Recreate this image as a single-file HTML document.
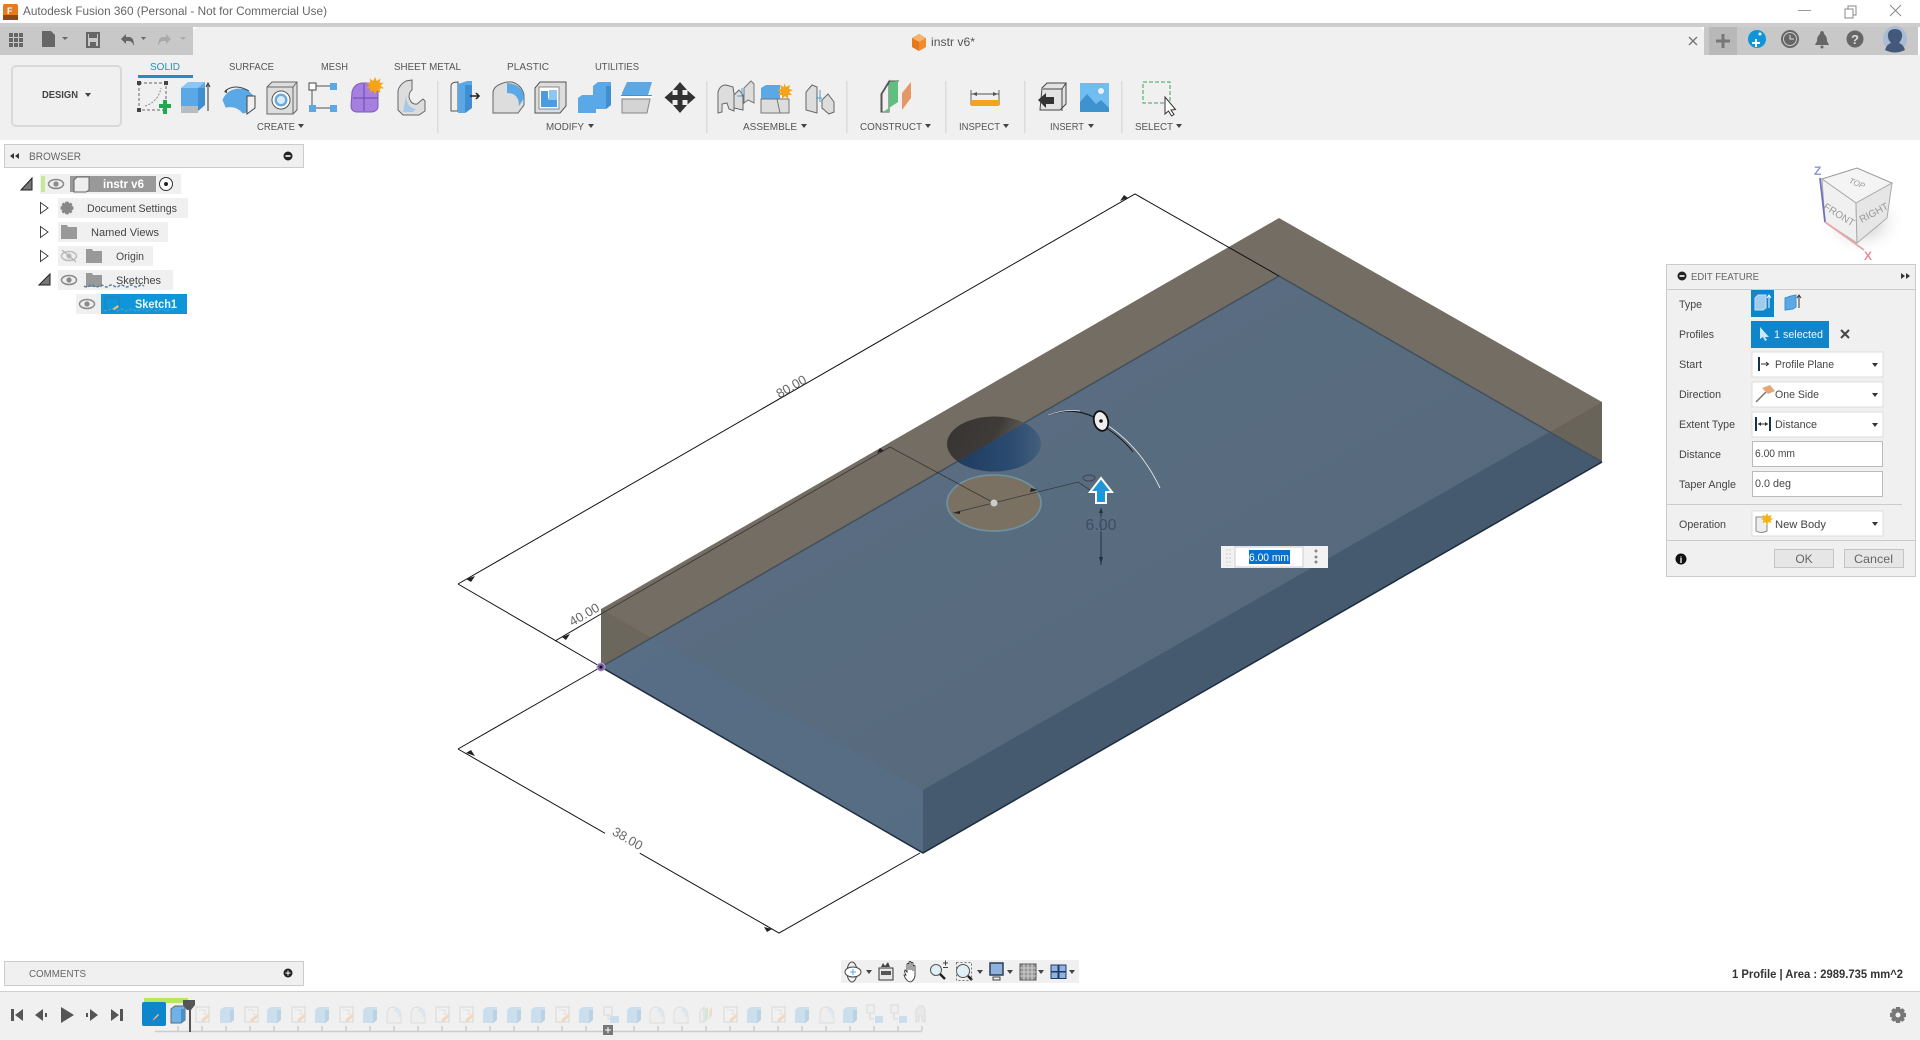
<!DOCTYPE html>
<html><head><meta charset="utf-8"><title>Autodesk Fusion 360</title>
<style>
html,body{margin:0;padding:0;background:#fff;width:1920px;height:1040px;overflow:hidden}
svg{display:block;position:absolute;left:0;top:0}
text{font-family:"Liberation Sans",Arial,sans-serif;font-size:11px;fill:#555}
.tb{font-size:10.5px;fill:#555}
.lb{font-size:11px;fill:#444}
</style></head><body>
<svg width="1920" height="1040" viewBox="0 0 1920 1040" xmlns="http://www.w3.org/2000/svg">
<defs>
<linearGradient id="gb" x1="0" y1="0" x2="1" y2="1"><stop offset="0" stop-color="#5c7085"/><stop offset="1" stop-color="#536679"/></linearGradient>
<linearGradient id="gh" x1="0" y1="0" x2="1" y2="0.3"><stop offset="0" stop-color="#353230"/><stop offset=".55" stop-color="#3f3b38"/><stop offset="1" stop-color="#7a756b"/></linearGradient>
<linearGradient id="gh2" x1="0" y1="0" x2="1" y2="0"><stop offset="0" stop-color="#1d3a5e"/><stop offset=".65" stop-color="#2b4b70"/><stop offset="1" stop-color="#47627f"/></linearGradient>
<radialGradient id="gs"><stop offset="0" stop-color="#aaa" stop-opacity=".85"/><stop offset="1" stop-color="#fff" stop-opacity="0"/></radialGradient>
<clipPath id="hc"><ellipse cx="994" cy="444" rx="47" ry="27.500"/></clipPath>
<g id="tsk"><rect x="-6" y="-8" width="13" height="15" fill="#f2f2f2" stroke="#c9c9c9"/><path d="M-3-5h6v6" fill="none" stroke="#ccc" stroke-dasharray="2 1"/><path d="M0 6L7 0" stroke="#f4c9a0" stroke-width="3"/></g>
<g id="tbd"><path d="M-7-5L-3-8H7V5L3 8H-7Z" fill="#b4d4ee"/><path d="M3-5H7V5L3 8Z" fill="#9cc0de"/></g>
<g id="tfl"><path d="M-7 8V-1Q-7-8 0-8Q7-6 7 1V8Z" fill="#eee" stroke="#d2d2d2"/><path d="M1-7Q7-5 7 2H4Q4-3 0-4Z" fill="#cfe2f2"/></g>
<g id="eye"><ellipse cx="0" cy="0" rx="7.5" ry="4.5" fill="#eee" stroke="#8a8a8a" stroke-width="1.5"/><circle r="2.6" fill="#8a8a8a"/></g>
<path id="folder" d="M0 2H6L7 4H16V16H0Z" fill="#999"/>
<path id="gear" d="M-2-8H2L2.6-5.6 4.6-6.8 6.9-4.5 5.6-2.5 8-2V2L5.6 2.6 6.8 4.6 4.5 6.9 2.5 5.6 2 8H-2L-2.6 5.6-4.6 6.8-6.9 4.5-5.6 2.5-8 2V-2L-5.6-2.6-6.8-4.6-4.5-6.9-2.5-5.6Z"/>
<path id="car" d="M-3 0H3L0 4Z" fill="#444"/>
</defs>

<!-- title bar -->
<rect width="1920" height="1040" fill="#fff"/>
<rect x="3" y="4" width="15" height="16" rx="2" fill="#e87a1c"/><rect x="3" y="15" width="15" height="5" fill="#8a4a14"/>
<text x="7" y="14" style="font-size:9px;font-weight:bold;fill:#fff">F</text>
<text x="23" y="15" textLength="304" lengthAdjust="spacingAndGlyphs" style="font-size:12px;fill:#666">Autodesk Fusion 360 (Personal - Not for Commercial Use)</text>
<path d="M1798 10.5h13" stroke="#999"/>
<path d="M1845 9h8v9h-8zM1848 9V6h8v9h-3" fill="#fff" stroke="#888"/>
<path d="M1890 5l11 11M1901 5l-11 11" stroke="#888"/>

<!-- header bars -->
<rect y="23" width="1920" height="4" fill="#cdcdcd"/>
<rect y="27" width="193" height="28" fill="#c8c8c8"/>
<rect x="1704" y="27" width="214" height="28" fill="#c8c8c8"/>
<rect y="55" width="1920" height="85" fill="#f0f0f0"/>
<path d="M193 55V33Q193 27 199 27H1698Q1704 27 1704 33V55Z" fill="#f0f0f0"/>
<!-- quick access -->
<g fill="#666"><rect x="9" y="33" width="4" height="4"/><rect x="14" y="33" width="4" height="4"/><rect x="19" y="33" width="4" height="4"/><rect x="9" y="38" width="4" height="4"/><rect x="14" y="38" width="4" height="4"/><rect x="19" y="38" width="4" height="4"/><rect x="9" y="43" width="4" height="4"/><rect x="14" y="43" width="4" height="4"/><rect x="19" y="43" width="4" height="4"/>
<path d="M42 31h9l4 4v12H42z"/><path d="M62 37h6l-3 3z"/>
<path d="M87 33h12v14H87z" fill="none" stroke="#666" stroke-width="2"/><rect x="89" y="33" width="8" height="5"/><rect x="90" y="42" width="6" height="5"/>
<path d="M121 39l5-5v3h3q5 0 5 9q-2-5-5-5h-3v3z"/><path d="M141 37h5l-2.500 3z"/></g>
<path d="M171 39l-5-5v3h-3q-5 0-5 9q2-5 5-5h3v3z" fill="#aaa"/><path d="M180 37h6l-3 3z" fill="#aaa"/>
<!-- doc tab -->
<path d="M919 34l7 4v9l-7 4-7-4v-9z" fill="#f28a2e"/><path d="M919 34l7 4-7 4-7-4z" fill="#f9b26c"/><path d="M919 42v9l-7-4v-9z" fill="#e57a1a"/>
<text x="931" y="46" textLength="44" lengthAdjust="spacingAndGlyphs" style="font-size:12px">instr v6*</text>
<path d="M1689 37l8 8M1697 37l-8 8" stroke="#777" stroke-width="1.400"/>
<rect x="1709" y="27" width="28" height="28" fill="#b8b8b8"/><path d="M1723 34v14M1716 41h14" stroke="#777" stroke-width="3"/>
<circle cx="1757" cy="39" r="9" fill="#0f96d8"/><path d="M1752 43h8M1756 39v8" stroke="#fff" stroke-width="2"/><circle cx="1760" cy="34" r="1.500" fill="#fff"/>
<circle cx="1790" cy="39" r="8.500" fill="#666" stroke="#666"/><circle cx="1790" cy="39" r="6.500" fill="none" stroke="#ccc"/><path d="M1790 35v4h4" stroke="#ddd" fill="none"/>
<path d="M1822 31q2 0 2 3q3 2 3 7l2 4h-14l2-4q0-5 3-7q0-3 2-3z" fill="#666"/><circle cx="1822" cy="47" r="1.500" fill="#666"/>
<circle cx="1855" cy="39" r="8.500" fill="#666"/><text x="1855" y="44" text-anchor="middle" style="font-size:13px;font-weight:bold;fill:#ddd">?</text>
<ellipse cx="1895" cy="39" rx="12" ry="13" fill="#a9bcd4"/><path d="M1885 50q2-6 6-7q-4-5-3-9q1-5 7-5q6 0 7 5q1 4-3 9q4 1 6 7q-10 5-20 0z" fill="#44597a"/>

<!-- design button -->
<rect x="12" y="66" width="109" height="60" rx="4" fill="#f0f0f0" stroke="#d9d9d9" stroke-width="2"/>
<text x="42" y="98" textLength="36" lengthAdjust="spacingAndGlyphs" style="font-size:10.500px;font-weight:bold;fill:#444">DESIGN</text>
<path d="M85 93h6l-3 4z" fill="#444"/>
<!-- tabs -->
<text class="tb" x="150" y="70" textLength="30" lengthAdjust="spacingAndGlyphs" style="fill:#1f8fc8">SOLID</text>
<rect x="138" y="75" width="55" height="3" fill="#1f8fc8"/>
<text class="tb" x="229" y="70" textLength="45" lengthAdjust="spacingAndGlyphs">SURFACE</text><text class="tb" x="321" y="70" textLength="27" lengthAdjust="spacingAndGlyphs">MESH</text><text class="tb" x="394" y="70" textLength="67" lengthAdjust="spacingAndGlyphs">SHEET METAL</text><text class="tb" x="507" y="70" textLength="42" lengthAdjust="spacingAndGlyphs">PLASTIC</text><text class="tb" x="595" y="70" textLength="44" lengthAdjust="spacingAndGlyphs">UTILITIES</text>
<!-- labels -->
<text class="tb" x="257" y="130" textLength="38" lengthAdjust="spacingAndGlyphs">CREATE</text><text class="tb" x="546" y="130" textLength="38" lengthAdjust="spacingAndGlyphs">MODIFY</text><text class="tb" x="743" y="130" textLength="54" lengthAdjust="spacingAndGlyphs">ASSEMBLE</text><text class="tb" x="860" y="130" textLength="62" lengthAdjust="spacingAndGlyphs">CONSTRUCT</text><text class="tb" x="959" y="130" textLength="41" lengthAdjust="spacingAndGlyphs">INSPECT</text><text class="tb" x="1050" y="130" textLength="34" lengthAdjust="spacingAndGlyphs">INSERT</text><text class="tb" x="1135" y="130" textLength="38" lengthAdjust="spacingAndGlyphs">SELECT</text>
<use href="#car" x="301" y="124"/><use href="#car" x="591" y="124"/><use href="#car" x="804" y="124"/><use href="#car" x="928" y="124"/><use href="#car" x="1006" y="124"/><use href="#car" x="1091" y="124"/><use href="#car" x="1179" y="124"/>
<!-- dividers -->
<g fill="#dcdcdc"><rect x="437" y="81" width="1.500" height="52"/><rect x="706" y="81" width="1.500" height="52"/><rect x="846" y="81" width="1.500" height="52"/><rect x="945" y="81" width="1.500" height="52"/><rect x="1024" y="81" width="1.500" height="52"/><rect x="1121" y="81" width="1.500" height="52"/></g>
<!-- create icons -->
<rect x="139" y="83" width="27" height="27" fill="none" stroke="#666" stroke-dasharray="3 2"/><path d="M145 106Q158 102 161 88" fill="none" stroke="#888" stroke-dasharray="2 1.500"/><g fill="#444"><rect x="137" y="81" width="4" height="4"/><rect x="164" y="81" width="4" height="4"/><rect x="137" y="108" width="4" height="4"/></g><path d="M159 104h4v-4h4v4h4v4h-4v6h-4v-6h-4z" fill="#22a94d"/>
<path d="M181 88l7-6h17v23l-7 6H181z" fill="#5aa9e6"/><path d="M181 88l7-6h17l-7 6z" fill="#8cc6f2"/><path d="M198 88h7v17l-7 6z" fill="#3f8fd0"/><path d="M181 106h17v7H181z" fill="#bbb"/><path d="M208 111V85M206 87l2-4 2 4" stroke="#333" fill="none"/>
<path d="M223 100q6-14 24-10l6 6q-3 0-6 16l-4 1q-6-8-17-6z" fill="#5aa9e6" stroke="#5aa9e6" stroke-linejoin="round"/><path d="M247 96h8v12l-8 6z" fill="#f0f0f0" stroke="#444"/><path d="M225 91q10-8 24 0" fill="none" stroke="#444"/><path d="M224 92l3-3v4z" fill="#444"/>
<path d="M267 87l5-5h25v28l-4 4H267z" fill="#ddd" stroke="#666"/><path d="M267 87h26v27M293 87l4-5" fill="none" stroke="#666"/><circle cx="281" cy="100" r="9" fill="#fff" stroke="#555"/><circle cx="281" cy="100" r="6.500" fill="#6aa9dc"/><circle cx="281" cy="100" r="4" fill="#d9ecf8"/>
<rect x="309" y="83" width="7" height="7" fill="#fff" stroke="#444"/><rect x="330" y="83" width="7" height="7" fill="#5aa9e6"/><rect x="309" y="105" width="7" height="7" fill="#5aa9e6"/><rect x="330" y="105" width="7" height="7" fill="#5aa9e6"/><path d="M316 86h14M316 108h14M312 90v15" stroke="#555"/>
<path d="M352 92q2-8 10-9h8q8 2 8 10v14q-1 5-8 5h-14q-5-1-5-6z" fill="#a67fe0" stroke="#7d5bb8"/><path d="M353 98h25M364 84v27" stroke="#6a4aa6"/><path d="M375 77l1.800 4 3.600-2.500-.8 4.300 4.300 0-3.500 2.700 3.500 2.700-4.300.5.800 4.300-3.600-2.500-1.800 4-1.800-4-3.600 2.500.8-4.300-4.300-.5 3.500-2.700-3.500-2.700 4.300 0-.8-4.300 3.600 2.500z" fill="#f4a416"/>
<path d="M398 110V91q1-6 8-10l6-1v10q-3 2-3 7q2 8 8 7l6-5 2 2v10l-6 4h-16z" fill="#ddd" stroke="#666"/><path d="M406 96q1 12 10 13l-3 3h-10z" fill="#a8c8e8"/>
<!-- modify icons -->
<path d="M451 111V86q0-4 7-4v29z" fill="#f0f0f0" stroke="#555"/><path d="M458 84l9-3h5v27l-7 5h-7z" fill="#5aa9e6"/><path d="M465 85h7v23l-7 5z" fill="#3f8fd0"/><path d="M470 96h8M476 93l3 3-3 3" stroke="#222" stroke-width="1.500" fill="none"/>
<path d="M493 113V93q0-8 14-11h5q10 3 12 13v10l-6 8z" fill="#ddd" stroke="#666"/><path d="M507 83q16 1 17 15l-5 8q0-13-12-13z" fill="#5aa9e6"/>
<path d="M535 88l5-6h26v24l-6 7H535z" fill="#ddd" stroke="#555"/><rect x="539" y="87" width="20" height="22" fill="#fff" stroke="#888"/><path d="M541 98h8v-8h8v17h-16z" fill="#8cc6f2"/><path d="M541 91h7v9h9v7h-16z" fill="#4a9be0"/>
<path d="M578 98l4-3h11V86l5-4h13v23l-5 4h-10v4H578z" fill="#5aa9e6"/><path d="M606 86h5v19l-5 4z" fill="#3f8fd0"/>
<path d="M622 93l5-11h25l-4 13H622z" fill="#5aa9e6"/><path d="M621 97h31" stroke="#fff" stroke-width="2"/><path d="M621 95.500h31" stroke="#4a90c8"/><path d="M622 99h28l-3 14H622z" fill="#d4d4d4" stroke="#888"/>
<path d="M680 82l7 8h-4.500v5h5v-4.500l8 7-8 7V100h-5v5H687l-7 8-7-8h4.500v-5h-5v4.500l-8-7 8-7V95h5v-5H673z" fill="#333"/>
<!-- assemble -->
<path d="M718 113V92q2-7 8-7l7 2 1 7v17l-5-2-2-6-5 1v8z" fill="#ddd" stroke="#666"/><path d="M734 108V95l5-5 4 5v15z" fill="#ddd" stroke="#666"/><path d="M744 103V88l7-7 3 3v19l-6-3z" fill="#ddd" stroke="#777"/><path d="M737 96h5v-8" stroke="#4a9cd9" fill="none"/>
<path d="M761 88l5-3h14v14h-19z" fill="#5aa9e6"/><path d="M761 99h19v14h-19z" fill="#ddd" stroke="#777"/><path d="M777 99h12l0 14h-9z" fill="#ddd" stroke="#777"/><path d="M784 83l2 4 4-2-1 4 4 1-4 2 3 3-4 0 0 4-3-3-3 3 0-4-4 0 3-3-4-2 4-1-1-4 4 2z" fill="#f4a416"/>
<path d="M806 110V92l6-7 5 2v26z" fill="#ddd" stroke="#666"/><path d="M820 90v12M816 98h6" stroke="#4a9cd9"/><path d="M822 100l6-6 6 8v10l-5 2-7-6z" fill="#ddd" stroke="#666"/>
<!-- construct -->
<path d="M881 112V94l8-13v31z" fill="#f0f0f0" stroke="#555"/><path d="M883 112l15-10V82l-9-1v31z" fill="#5fbf7e"/><path d="M902 110l9-12V82l-9 11z" fill="#e59865"/>
<path d="M882 112V94l8-13 9 0" fill="none" stroke="#555"/>
<!-- inspect -->
<path d="M971 90v15M999 90v15" stroke="#666"/><path d="M971 94h28" stroke="#555"/><path d="M972 94l5-2v4zM998 94l-5-2v4z" fill="#555"/><rect x="971" y="100" width="28" height="6" fill="#f2a51c"/>
<!-- insert -->
<path d="M1042 88l5-5h19v21l-6 6h-20z" fill="#e3e3e3" stroke="#444"/><path d="M1043 89h19v22M1062 89l4-6" fill="none" stroke="#444"/><path d="M1038 100l8-7v4h8v7h-8v4z" fill="#333"/>
<rect x="1080" y="83" width="29" height="29" fill="#70bdf2"/><path d="M1080 112V102l7-8 9 10 5-4 8 8v4z" fill="#3e92cd"/><circle cx="1101" cy="91" r="3" fill="#e6f4ff"/>
<!-- select -->
<rect x="1143" y="82" width="27" height="21" fill="none" stroke="#3da35d" stroke-dasharray="4 2"/>
<path d="M1165 97v17l3.500-3 3 5 2.500-1.500-3-4.500 4.500-.5z" fill="#fff" stroke="#333"/>

<!-- 3D model -->
<path d="M601 667L1279 276L1602 462L923 853Z" fill="url(#gb)"/>
<path d="M601 609L601 667L923 853L923 790Z" fill="#557089" opacity=".55"/>
<path d="M923 790L1602 402V462L923 853Z" fill="#45596f"/>
<path d="M601 609L1279 218L1602 402V462L1279 276L601 667Z" fill="#736d63"/>
<path d="M601 609L652 638L601 667Z" fill="#6b675c"/>
<path d="M1602 402L1602 462L1550 432Z" fill="#69645a"/>
<path d="M601 667L1279 276L1602 462" fill="none" stroke="#434f5c" stroke-width="1.500"/>
<path d="M601 667L923 853L1602 462" fill="none" stroke="#1d2c3e" stroke-width="1.500"/>
<!-- hole -->
<g clip-path="url(#hc)">
<rect x="945" y="414" width="100" height="60" fill="url(#gh)"/>
<path d="M950 466L1045 411V475H950Z" fill="url(#gh2)"/>
</g>
<!-- sketch circle -->
<ellipse cx="994" cy="503" rx="47" ry="28" fill="#7a7163" stroke="#6f93a2" stroke-width="1.600"/>
<!-- dimensions -->
<g stroke="#111" fill="none" stroke-width="1">
<path d="M458 584L1135 194L1279 276"/>
<path d="M458 584L601 667"/>
<path d="M458 749L601 667"/>
<path d="M458 749L779 933L920 853"/>
<path d="M555 641L601 614"/>
</g>
<g stroke="#2a2a2a" fill="none" stroke-width=".8" opacity=".8">
<path d="M601 614L890 447L994 503"/>
<path d="M953 513L1078 482L1090 490"/>
</g>
<g fill="#222">
<path d="M466 579l9-3-4 6z"/><path d="M1128 198l-8 3 4-6z"/><path d="M562 637l8-3-4 6z"/><path d="M884 451l-7 2 3-5z"/><path d="M466 753l9 3-4-6z"/><path d="M772 929l-8-2 3 5z"/>
</g>
<rect x="760" y="372" width="44" height="20" fill="#fff" transform="rotate(-30 782 382)"/>
<rect x="561" y="604" width="36" height="18" fill="#fff" transform="rotate(-30 579 613)"/>
<rect x="606" y="827" width="40" height="20" fill="#fff" transform="rotate(30 626 837)"/>
<text x="791" y="391" text-anchor="middle" transform="rotate(-30 791 386)" style="font-size:13px;fill:#666">80.00</text>
<text x="584" y="619" text-anchor="middle" transform="rotate(-30 584 614)" style="font-size:13px;fill:#666">40.00</text>
<text x="628" y="843" text-anchor="middle" transform="rotate(30 628 838)" style="font-size:13px;fill:#666">38.00</text>
<circle cx="601" cy="667" r="4" fill="#7a5fa0" stroke="#b8a4d0"/><circle cx="601" cy="667" r="1.500" fill="#111"/>
<path d="M960 511l-6 2 6 1zM1030 492l8-2-7-2z" fill="#222"/>
<circle cx="994" cy="503" r="3.500" fill="#ccc"/>
<!-- manipulators -->
<path d="M1048 415Q1075 405 1101 421" stroke="#1a1a1a" fill="none" stroke-width="1.200"/><path d="M1048 415Q1064 409 1080 411" stroke="#dde" fill="none" stroke-width=".7"/>
<path d="M1101 421Q1140 445 1160 488" stroke="#e2e6ea" fill="none" stroke-width=".9"/><path d="M1106 426Q1124 438 1134 451" stroke="#111" fill="none" stroke-width=".8" transform="translate(-1,1)"/>
<ellipse cx="1101" cy="421" rx="7" ry="10" transform="rotate(-15 1101 421)" fill="#eee" stroke="#111" stroke-width="1.800"/><circle cx="1101" cy="421" r="1.800" fill="#111"/>
<ellipse cx="1089" cy="478" rx="6" ry="3" fill="none" stroke="#445"/>
<path d="M1101 478l11 14h-6v11h-10v-11h-6z" fill="#1e96dc" stroke="#fff" stroke-width="2"/>
<path d="M1101 508v57" stroke="#1f3045"/><path d="M1099 513l2-5 2 5zM1099 557l2 7 2-7z" fill="#1f3045"/>
<rect x="1086" y="516" width="30" height="16" fill="#5a6f84" opacity=".5"/>
<text x="1101" y="530" text-anchor="middle" style="font-size:16px;fill:#3c4d63">6.00</text>
<!-- input -->
<rect x="1221" y="546" width="107" height="22" fill="#f2f2f2"/>
<path d="M1227 549v17M1230 549v17" stroke="#ccc" stroke-dasharray="2 2"/>
<rect x="1235" y="547" width="68" height="20" fill="#fff" stroke="#ccc"/>
<rect x="1249" y="550" width="41" height="14" fill="#0a70d0"/>
<text x="1249" y="561" textLength="40" lengthAdjust="spacingAndGlyphs" style="font-size:11px;fill:#fff">6.00 mm</text>
<g fill="#888"><circle cx="1316" cy="551" r="1.500"/><circle cx="1316" cy="557" r="1.500"/><circle cx="1316" cy="562" r="1.500"/></g>

<!-- browser -->
<rect x="4.500" y="144.500" width="299" height="23" fill="#f0f0f0" stroke="#ccc"/>
<path d="M10 156l4-3v6zM15 156l4-3v6z" fill="#333"/>
<text x="29" y="160" textLength="52" lengthAdjust="spacingAndGlyphs" style="fill:#666">BROWSER</text>
<circle cx="288" cy="156" r="4.500" fill="#222"/><rect x="285.500" y="155.200" width="5" height="1.600" fill="#fff"/>
<g fill="#f0f0f0"><rect x="40" y="174" width="141" height="20"/><rect x="58" y="198" width="130" height="20"/><rect x="58" y="222" width="110" height="20"/><rect x="58" y="246" width="95" height="20"/><rect x="58" y="270" width="115" height="20"/><rect x="76" y="294" width="111" height="20"/></g>
<path d="M21 190L32 178V190Z" fill="#777" stroke="#222"/>
<rect x="41" y="176" width="4" height="16" fill="#c8e896"/>
<use href="#eye" x="56" y="184"/>
<rect x="70" y="176" width="86" height="16" fill="#999"/>
<path d="M74 180l3-3h12v13l-3 2H74z" fill="#eee" stroke="#666"/>
<text x="103" y="188" textLength="41" lengthAdjust="spacingAndGlyphs" style="font-weight:bold;fill:#fff;font-size:11.500px">instr v6</text>
<circle cx="166" cy="184" r="6.500" fill="#fff" stroke="#333"/><circle cx="166" cy="184" r="2" fill="#222"/>
<path d="M40.500 202.500L48 208L40.500 213.500ZM40.500 226.500L48 232L40.500 237.500ZM40.500 250.500L48 256L40.500 261.500Z" fill="#fff" stroke="#444"/>
<g transform="translate(67 208) scale(.8)"><use href="#gear" fill="#888"/></g>
<text class="lb" x="87" y="212" textLength="90" lengthAdjust="spacingAndGlyphs">Document Settings</text>
<use href="#folder" x="61" y="223" />
<text class="lb" x="91" y="236" textLength="68" lengthAdjust="spacingAndGlyphs">Named Views</text>
<use href="#eye" x="69" y="256" opacity=".5"/><path d="M62 250l14 12" stroke="#aaa"/>
<use href="#folder" x="86" y="247"/>
<text class="lb" x="116" y="260" textLength="28" lengthAdjust="spacingAndGlyphs">Origin</text>
<path d="M39 285L50 274V285Z" fill="#777" stroke="#222"/>
<use href="#eye" x="69" y="280"/>
<use href="#folder" x="86" y="271"/>
<text class="lb" x="116" y="284" textLength="45" lengthAdjust="spacingAndGlyphs">Sketches</text>
<path d="M84 286q3 2 5 0t5 0 5 0 5 0 5 0 5 0 5 0 5 0 5 0 5 0 5 0 5 0" fill="none" stroke="#5b7fa0" stroke-width="1.500" stroke-dasharray="3 1.500"/>
<use href="#eye" x="87" y="304"/>
<rect x="101" y="294" width="86" height="20" fill="#0f96d8"/>
<path d="M112 309l6-4 1 2-5 3z" fill="#e9c27a"/><rect x="105" y="297" width="14" height="14" fill="none" stroke="#2b7fb2"/>
<text x="135" y="308" textLength="42" lengthAdjust="spacingAndGlyphs" style="font-weight:bold;fill:#e8f6ff;font-size:11.500px">Sketch1</text>
<path d="M104 310q3 2 5 0t5 0 5 0 5 0 5 0 5 0 5 0 5 0 5 0 5 0 5 0 5 0 5 0 5 0" fill="none" stroke="#5aa0cc" stroke-dasharray="3 1.500"/>

<!-- view cube -->
<ellipse cx="1862" cy="222" rx="44" ry="34" fill="url(#gs)"/>
<path d="M1822 179L1857 168L1892 183L1856 203Z" fill="#f4f4f4" stroke="#999"/>
<path d="M1822 179L1856 203L1857 243L1825 222Z" fill="#f0f0f0" stroke="#aaa"/>
<path d="M1856 203L1892 183L1887 218L1857 243Z" fill="#e6e6e6" stroke="#aaa"/>
<text x="1857" y="186" text-anchor="middle" transform="rotate(22 1857 183)" style="font-size:8px;font-style:italic;fill:#999">TOP</text>
<text x="1839" y="218" text-anchor="middle" transform="rotate(32 1839 215)" style="font-size:10px;fill:#999">FRONT</text>
<text x="1874" y="216" text-anchor="middle" transform="rotate(-28 1874 213)" style="font-size:10px;fill:#999">RIGHT</text>
<path d="M1820 178L1825 222" stroke="#6d72c0" stroke-width="1.800"/>
<path d="M1825 222L1864 250" stroke="#e8a8a8" stroke-width="1.800"/>
<text x="1814" y="175" style="font-size:12px;font-weight:bold;fill:#8e96d8">Z</text>
<text x="1864" y="260" style="font-size:12px;font-weight:bold;fill:#f08a96">X</text>

<!-- edit panel -->
<rect x="1666.500" y="264.500" width="249" height="312" fill="#f0f0f0" stroke="#ccc"/>
<path d="M1666 289.500h250" stroke="#ccc"/>
<circle cx="1682" cy="276" r="4.500" fill="#222"/><rect x="1679.500" y="275.200" width="5" height="1.600" fill="#fff"/>
<text x="1691" y="280" textLength="68" lengthAdjust="spacingAndGlyphs" style="font-size:10.500px;fill:#666">EDIT FEATURE</text>
<path d="M1901 273l4 3-4 3zM1906 273l4 3-4 3z" fill="#333"/>
<text class="lb" x="1679" y="308" textLength="23" lengthAdjust="spacingAndGlyphs">Type</text><text class="lb" x="1679" y="338" textLength="35" lengthAdjust="spacingAndGlyphs">Profiles</text><text class="lb" x="1679" y="368" textLength="23" lengthAdjust="spacingAndGlyphs">Start</text><text class="lb" x="1679" y="398" textLength="42" lengthAdjust="spacingAndGlyphs">Direction</text><text class="lb" x="1679" y="428" textLength="56" lengthAdjust="spacingAndGlyphs">Extent Type</text><text class="lb" x="1679" y="458" textLength="42" lengthAdjust="spacingAndGlyphs">Distance</text><text class="lb" x="1679" y="488" textLength="57" lengthAdjust="spacingAndGlyphs">Taper Angle</text><text class="lb" x="1679" y="528" textLength="47" lengthAdjust="spacingAndGlyphs">Operation</text>
<rect x="1751" y="290" width="23" height="27" fill="#0f86cc"/>
<path d="M1755 298l3-3h8v13l-3 2h-8z" fill="#9ecbee" stroke="#cde"/><path d="M1769 308v-12M1767 298l2-3 2 3" stroke="#fff" fill="none"/>
<path d="M1785 298l6-2 5-1v12l-3 2-8 1z" fill="#5aa9e6" stroke="#3f8fd0"/><path d="M1799 308v-12M1797 298l2-3 2 3" stroke="#333" fill="none"/>
<rect x="1751" y="321" width="78" height="27" fill="#0f86cc"/>
<path d="M1760 327v12l3-2 2 4 2-1-2-3h4z" fill="#cce8f8"/>
<text x="1774" y="338" textLength="49" lengthAdjust="spacingAndGlyphs" style="font-size:11px;fill:#eaf6ff">1 selected</text>
<path d="M1841 330l8 8M1849 330l-8 8" stroke="#444" stroke-width="2"/>
<g fill="#fff" stroke="#dcdcdc"><rect x="1752" y="352" width="131" height="25"/><rect x="1752" y="382" width="131" height="25"/><rect x="1752" y="412" width="131" height="25"/><rect x="1752" y="511" width="131" height="25"/></g>
<g fill="#fff" stroke="#bbb"><rect x="1752.500" y="441.500" width="130" height="25"/><rect x="1752.500" y="471.500" width="130" height="25"/></g>
<path d="M1759 357v14" stroke="#17314e" stroke-width="2"/><path d="M1761 364h7M1766 362l2.500 2-2.500 2" stroke="#333" fill="none"/>
<text class="lb" x="1775" y="368" textLength="59" lengthAdjust="spacingAndGlyphs">Profile Plane</text>
<path d="M1756 402l10-10" stroke="#777" stroke-width="1.500"/><path d="M1762 388l8-3 5 6-7 3z" fill="#e4a878"/>
<text class="lb" x="1775" y="398" textLength="44" lengthAdjust="spacingAndGlyphs">One Side</text>
<path d="M1756 417v14M1770 417v14" stroke="#17314e" stroke-width="2"/><path d="M1758 424h10" stroke="#333"/><path d="M1758 424l3-2v4zM1768 424l-3-2v4z" fill="#333"/>
<text class="lb" x="1775" y="428" textLength="42" lengthAdjust="spacingAndGlyphs">Distance</text>
<text class="lb" x="1755" y="457" textLength="40" lengthAdjust="spacingAndGlyphs">6.00 mm</text>
<text class="lb" x="1755" y="487" textLength="36" lengthAdjust="spacingAndGlyphs">0.0 deg</text>
<path d="M1756 517v14q5 3 11 0v-14z" fill="#eee" stroke="#888"/><path d="M1767 513l1.500 3 3-1-1 3 3 1-3 1 1 3-3-1-1.500 3-1.500-3-3 1 1-3-3-1 3-1-1-3 3 1z" fill="#f4b416"/>
<text class="lb" x="1775" y="528" textLength="51" lengthAdjust="spacingAndGlyphs">New Body</text>
<g fill="#333"><path d="M1872 363h6l-3 4zM1872 393h6l-3 4zM1872 423h6l-3 4zM1872 522h6l-3 4z"/></g>
<path d="M1666 504.500h236M1666 540.500h250" stroke="#ccc"/>
<circle cx="1681" cy="559" r="5.500" fill="#111"/><text x="1681" y="563" text-anchor="middle" style="font-weight:bold;font-size:9px;fill:#fff">i</text>
<rect x="1774.500" y="549.500" width="59" height="18" fill="#e6e6e6" stroke="#c4c4c4"/><text x="1804" y="563" text-anchor="middle" style="font-size:12px;fill:#666">OK</text>
<rect x="1844.500" y="549.500" width="59" height="18" fill="#e6e6e6" stroke="#c4c4c4"/><text x="1854" y="563" textLength="39" lengthAdjust="spacingAndGlyphs" style="font-size:12px;fill:#666">Cancel</text>

<!-- comments -->
<rect x="4.500" y="961.500" width="299" height="24" fill="#f0f0f0" stroke="#ccc"/>
<text x="29" y="977" textLength="57" lengthAdjust="spacingAndGlyphs" style="font-size:10.500px;fill:#666">COMMENTS</text>
<circle cx="288" cy="973" r="4.500" fill="#222"/><path d="M285.500 973h5M288 970.500v5" stroke="#fff"/>
<!-- nav bar -->
<rect x="841" y="960" width="238" height="23" fill="#f0f0f0"/>
<ellipse cx="852" cy="972" rx="5" ry="10" fill="none" stroke="#444"/><ellipse cx="853" cy="972" rx="8" ry="5" fill="#fff" stroke="#444"/><path d="M850 972h6M853 969v6" stroke="#5aa9e6"/>
<use href="#car" x="869" y="970"/>
<rect x="879" y="968" width="14" height="12" fill="#e8e8e8" stroke="#333"/><rect x="881" y="971" width="10" height="4" fill="#555"/><path d="M881 967l2-4 2 3 3-4 2 5z" fill="#444"/>
<path d="M906 975q-2-3-1-5l2 2v-8q1-1 2 0v6-8q1-1 2 0v8-7q1-1 2 0v8-5q1-1 2 0v10q-1 5-5 6-4-1-6-7z" fill="#fff" stroke="#333" stroke-width=".9"/>
<circle cx="936" cy="970" r="5.500" fill="#dff0f6" stroke="#555"/><path d="M940 974l5 5" stroke="#222" stroke-width="2.500"/><path d="M943 963h5M945.500 960.500v5M943 967.500h5" stroke="#444"/>
<circle cx="963" cy="971" r="6.500" fill="#dff0f6" stroke="#555"/><path d="M968 976l4 4" stroke="#222" stroke-width="2.500"/><rect x="956.500" y="962.500" width="15" height="18" fill="none" stroke="#777" stroke-dasharray="2 2"/>
<use href="#car" x="980" y="970"/>
<rect x="990" y="963" width="13" height="12" fill="#8fb3dc" stroke="#2c3e55" stroke-width="1.500"/><path d="M993 977h7v3h-7z" fill="none" stroke="#444"/>
<use href="#car" x="1010" y="970"/>
<rect x="1020" y="964" width="16" height="16" fill="#999" stroke="#555"/><path d="M1024 964v16M1028 964v16M1032 964v16M1020 968h16M1020 972h16M1020 976h16" stroke="#ddd" stroke-width=".8"/>
<use href="#car" x="1041" y="970"/>
<g fill="#8fb3dc" stroke="#1f3a66"><rect x="1051" y="965" width="7" height="6.500"/><rect x="1059" y="965" width="7" height="6.500"/><rect x="1051" y="972" width="7" height="6.500"/><rect x="1059" y="972" width="7" height="6.500"/></g>
<use href="#car" x="1072" y="970"/>
<text x="1732" y="978" textLength="171" lengthAdjust="spacingAndGlyphs" style="font-size:11.500px;font-weight:bold;fill:#333">1 Profile | Area : 2989.735 mm^2</text>

<!-- timeline -->
<rect y="991" width="1920" height="49" fill="#f0f0f0"/><path d="M0 991.500h1920" stroke="#d0d0d0"/>
<g fill="#555">
<path d="M11 1009h3v12h-3zM23 1009v12l-8-6z"/>
<path d="M43 1009v12l-8-6zM45 1013h2v4h-2z"/>
<path d="M61 1007l13 8-13 8z"/>
<path d="M86 1013h2v4h-2zM90 1009l8 6-8 6z"/>
<path d="M111 1009l8 6-8 6zM120 1009h3v12h-3z"/>
</g>
<path d="M155 1031.500H922" stroke="#ccc" stroke-width="1.500"/>
<path d="M178 1026v5M202 1026v5M226 1026v5M250 1026v5M274 1026v5M298 1026v5M322 1026v5M346 1026v5M370 1026v5M394 1026v5M418 1026v5M442 1026v5M466 1026v5M490 1026v5M514 1026v5M538 1026v5M562 1026v5M586 1026v5M610 1026v5M634 1026v5M658 1026v5M682 1026v5M706 1026v5M730 1026v5M754 1026v5M778 1026v5M802 1026v5M826 1026v5M850 1026v5M874 1026v5M898 1026v5M922 1026v5" stroke="#bbb"/>
<rect x="144" y="998" width="44" height="5" fill="#b4e85a"/>
<rect x="142" y="1002" width="24" height="24" rx="2" fill="#0f86cc"/>
<path d="M153 1019l5-5 1 1-5 5z" fill="#e8c27a"/><path d="M153 1020l2-2" stroke="#e88"/>
<path d="M171 1009l4-3h10v14l-4 3h-10z" fill="#6fb2e8" stroke="#666"/><path d="M181 1009h4v11l-4 3z" fill="#4a8fc8"/>
<g opacity=".62">
<use href="#tsk" x="202" y="1015"/><use href="#tbd" x="227" y="1015"/><use href="#tsk" x="251" y="1015"/><use href="#tbd" x="274" y="1015"/><use href="#tsk" x="298" y="1015"/><use href="#tbd" x="322" y="1015"/><use href="#tsk" x="346" y="1015"/><use href="#tbd" x="370" y="1015"/><use href="#tfl" x="394" y="1015"/><use href="#tfl" x="418" y="1015"/><use href="#tsk" x="442" y="1015"/><use href="#tsk" x="466" y="1015"/><use href="#tbd" x="490" y="1015"/><use href="#tbd" x="514" y="1015"/><use href="#tbd" x="538" y="1015"/><use href="#tsk" x="562" y="1015"/><use href="#tbd" x="586" y="1015"/>
<path d="M604 1007h8v8h-8zM608 1015v4h5" fill="none" stroke="#ccc"/><rect x="610" y="1016" width="9" height="7" fill="#b4d4ee"/>
<use href="#tbd" x="634" y="1015"/><use href="#tfl" x="657" y="1015"/><use href="#tfl" x="681" y="1015"/>
<path d="M700 1022v-10l4-5v15z" fill="#eee" stroke="#ccc"/><path d="M705 1022l3-3v-12l-3 2z" fill="#bfe3cb"/><path d="M709 1020l3-5v-8l-3 4z" fill="#f1cfb8"/>
<use href="#tsk" x="730" y="1015"/><use href="#tbd" x="754" y="1015"/><use href="#tsk" x="778" y="1015"/><use href="#tbd" x="802" y="1015"/><use href="#tfl" x="827" y="1015"/><use href="#tbd" x="850" y="1015"/>
<path d="M867 1005h7v8h-7zM870 1013v6h4" fill="none" stroke="#ccc"/><rect x="875" y="1016" width="8" height="7" fill="#b4d4ee"/>
<path d="M891 1005h7v8h-7zM894 1013v6h4" fill="none" stroke="#ccc"/><rect x="899" y="1016" width="8" height="7" fill="#b4d4ee"/>
<path d="M916 1022v-12l3-4h4l2 4v12l-3-1v-5h-3v5z" fill="#e6e6e6" stroke="#d0d0d0"/>
</g>
<path d="M183 1000h12v5l-4 5h-4l-4-5z" fill="#555"/><rect x="189" y="1005" width="2" height="27" fill="#555"/>
<rect x="603" y="1025" width="10" height="10" fill="#777"/><path d="M605 1030h6M608 1027v6" stroke="#fff"/>
<use href="#gear" x="1898" y="1015" fill="#777"/><circle cx="1898" cy="1015" r="2.500" fill="#f0f0f0"/>
</svg>
</body></html>
